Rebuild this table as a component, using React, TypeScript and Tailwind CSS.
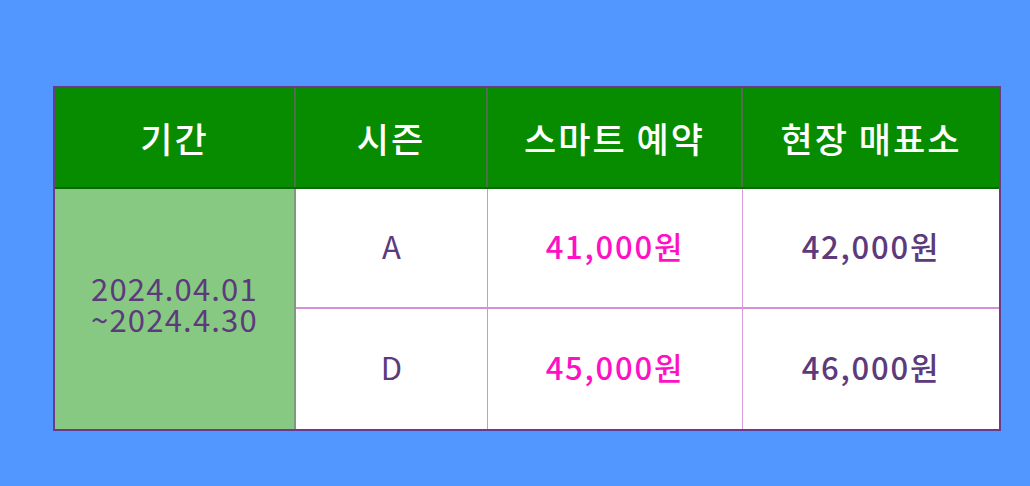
const font = "font-['Noto_Sans_CJK_KR','Noto_Sans',sans-serif]";

const headers = ["기간", "시즌", "스마트 예약", "현장 매표소"];

const rows = [
  { season: "A", smart: "41,000원", onsite: "42,000원" },
  { season: "D", smart: "45,000원", onsite: "46,000원" },
];

export default function App() {
  return (
    <div className={`w-[1030px] h-[486px] bg-[#5297ff] pt-[86px] pl-[53px] ${font}`}>
      <div className="w-[948px] border-2 border-[#6a3b8c] bg-white">
        <div className="grid grid-cols-[241px_192px_255px_256px] h-[101px] bg-[#078c00] border-b-2 border-[#056a00] text-white text-[35px] font-medium">
          {headers.map((h, i) => (
            <div
              key={h}
              className={`flex items-center justify-center pt-[2px] tracking-[2px] ${i < 3 ? "border-r-2 border-[#4f6f4c]" : ""}`}
            >
              {h}
            </div>
          ))}
        </div>
        <div className="grid grid-cols-[241px_192px_255px_256px] grid-rows-[120px_120px] text-[31px] text-[#5c3a7c]">
          <div className="row-span-2 flex flex-col items-center justify-center pb-[12px] bg-[#87c982] border-r-2 border-[#7d9a7c] leading-[31px] text-center tracking-[1.2px]">
            <span>2024.04.01</span>
            <span>~2024.4.30</span>
          </div>
          {rows.map((r, i) => (
            <div key={r.season} className="contents">
              <div className={`flex items-center justify-center pb-[4px] border-r border-[#d690d6] ${i === 0 ? "border-b-2" : ""}`}>
                {r.season}
              </div>
              <div className={`flex items-center justify-center pb-[4px] tracking-[1.8px] border-r border-[#dc9ddc] text-[#ff10c4] font-medium ${i === 0 ? "border-b-2 border-b-[#d690d6]" : ""}`}>
                {r.smart}
              </div>
              <div className={`flex items-center justify-center pb-[4px] tracking-[1.8px] font-medium ${i === 0 ? "border-b-2 border-[#d690d6]" : ""}`}>
                {r.onsite}
              </div>
            </div>
          ))}
        </div>
      </div>
    </div>
  );
}
